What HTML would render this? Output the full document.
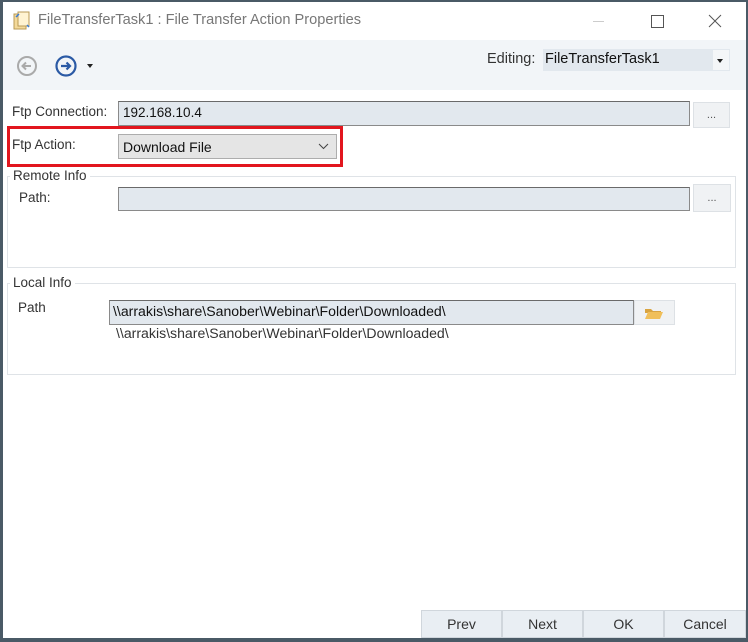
<!DOCTYPE html>
<html><head><style>
*{box-sizing:border-box;margin:0;padding:0}
body{width:748px;height:642px;background:#4a5a66;position:relative;overflow:hidden;font-family:"Liberation Sans",sans-serif;font-size:13px;color:#222}
.win{position:absolute;left:3px;top:2px;width:743px;height:636px;background:#fff}
.a{position:absolute}
.inp{position:absolute;background:#e2e8ee;border:1px solid #8a8a8a;border-top-color:#6a6a6a;padding:3px 4px;font-size:13.5px;color:#111}
.btn{position:absolute;background:#f0f2f4;border:1px solid #dde1e5;text-align:center;color:#555;font-size:11px}
.grp{position:absolute;border:1px solid #dfe3e7}
.leg{position:absolute;background:#fff;padding:0 3px;font-size:13.5px;color:#333}
.fb{position:absolute;top:610px;height:28px;width:81px;background:#e9eef3;border:1px solid #d0d6dc;text-align:center;line-height:26px;font-size:14px;color:#333}
</style></head><body>
<div class="win"></div>
<svg class="a" style="left:12px;top:11px" width="20" height="20" viewBox="0 0 20 20"><rect x="2" y="3" width="12" height="15" fill="#f3d99a" stroke="#b89a55"/><rect x="6" y="1" width="11" height="14" fill="#fff3d2" stroke="#b89a55"/><path d="M4 6 l3-3 M15 14 l2 2" stroke="#3a7bd5" stroke-width="1.5"/></svg>
<div class="a" style="left:38px;top:12px;font-size:14.6px;color:#777">FileTransferTask1 : File Transfer Action Properties</div>
<div class="a" style="left:593px;top:21px;width:11px;height:1px;background:#ccc"></div>
<div class="a" style="left:651px;top:15px;width:13px;height:13px;border:1px solid #555"></div>
<svg class="a" style="left:708px;top:14px" width="14" height="14"><path d="M1 1L13 13M13 1L1 13" stroke="#555" stroke-width="1"/></svg>
<div class="a" style="left:3px;top:40px;width:743px;height:50px;background:#f2f5f8"></div>
<svg class="a" style="left:16px;top:55px" width="22" height="22"><circle cx="11" cy="11" r="9" fill="none" stroke="#aaa" stroke-width="2"/><path d="M15 11H7M10 7.5L6.5 11 10 14.5" fill="none" stroke="#aaa" stroke-width="2"/></svg>
<svg class="a" style="left:54px;top:54px" width="24" height="24"><circle cx="12" cy="12" r="9.5" fill="none" stroke="#2b5aa5" stroke-width="2.2"/><path d="M7 12H16M12.5 8.5L16 12 12.5 15.5" fill="none" stroke="#2b5aa5" stroke-width="2.2"/></svg>
<div class="a" style="left:87px;top:64px;border-left:3px solid transparent;border-right:3px solid transparent;border-top:4px solid #222"></div>
<div class="a" style="left:487px;top:51px;font-size:14.5px;color:#333">Editing:</div>
<div class="a" style="left:543px;top:49px;width:187px;height:22px;background:#e2e8ee;font-size:14.5px;padding:2px 2px;color:#111">FileTransferTask1</div>
<div class="a" style="left:713px;top:50px;width:16px;height:20px;background:#f4f6f8"></div>
<div class="a" style="left:717px;top:59px;border-left:3px solid transparent;border-right:3px solid transparent;border-top:4px solid #222"></div>
<div class="a" style="left:12px;top:104px;font-size:13.5px;color:#333">Ftp Connection:</div>
<div class="inp" style="left:118px;top:101px;width:572px;height:25px">192.168.10.4</div>
<div class="btn" style="left:693px;top:102px;width:37px;height:26px;line-height:24px">...</div>
<div class="a" style="left:7px;top:126px;width:336px;height:41px;border:3px solid #e2161e"></div>
<div class="a" style="left:12px;top:137px;font-size:13.5px;color:#333">Ftp Action:</div>
<div class="a" style="left:118px;top:134px;width:219px;height:25px;background:#e5e5e5;border:1px solid #adadad;padding:4px 4px;font-size:14px;color:#111">Download File</div>
<svg class="a" style="left:318px;top:143px" width="11" height="7"><path d="M1 1L5.5 5.5 10 1" fill="none" stroke="#444"/></svg>
<div class="grp" style="left:7px;top:176px;width:729px;height:92px"></div>
<div class="leg" style="left:10px;top:168px">Remote Info</div>
<div class="a" style="left:19px;top:190px;font-size:13.5px;color:#333">Path:</div>
<div class="inp" style="left:118px;top:187px;width:572px;height:24px"></div>
<div class="btn" style="left:693px;top:184px;width:38px;height:28px;line-height:26px">...</div>
<div class="grp" style="left:7px;top:283px;width:729px;height:92px"></div>
<div class="leg" style="left:10px;top:275px">Local Info</div>
<div class="a" style="left:18px;top:300px;font-size:13.5px;color:#333">Path</div>
<div class="inp" style="left:109px;top:300px;width:525px;height:25px;padding:2px 3px;font-size:14.1px">\\arrakis\share\Sanober\Webinar\Folder\Downloaded\</div>
<div class="btn" style="left:634px;top:300px;width:41px;height:25px"></div>
<svg class="a" style="left:644px;top:306px" width="20" height="14"><path d="M1 3h6l2 2h8v2H1z" fill="#d9a441"/><path d="M1 13L4 6h15l-3 7z" fill="#f0bf5a"/></svg>
<div class="a" style="left:116px;top:325px;font-size:14.1px;color:#333">\\arrakis\share\Sanober\Webinar\Folder\Downloaded\</div>
<div class="fb" style="left:421px">Prev</div>
<div class="fb" style="left:502px">Next</div>
<div class="fb" style="left:583px">OK</div>
<div class="fb" style="left:664px;width:82px">Cancel</div>
</body></html>
